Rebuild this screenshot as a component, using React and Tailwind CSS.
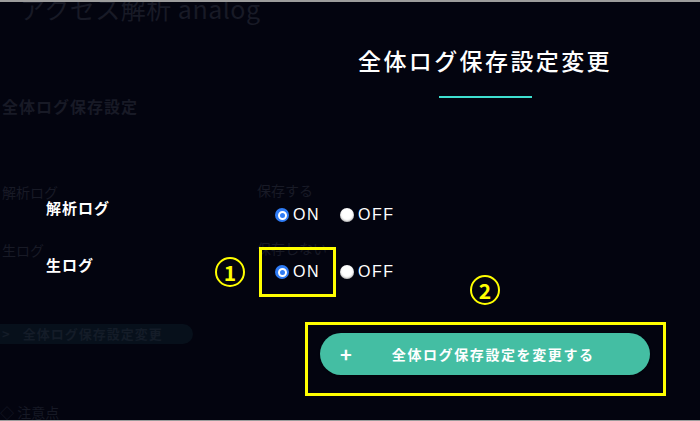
import React from 'react';

const FONT = { fontFamily: '"Noto Sans CJK JP", "Noto Sans", sans-serif' };
const LATIN = { fontFamily: '"Liberation Sans", "Noto Sans CJK JP", sans-serif' };

function Radio({ checked }) {
  if (checked) {
    return (
      <span className="flex h-[14px] w-[14px] items-center justify-center rounded-full bg-[#2f7cf6]">
        <span className="h-[9px] w-[9px] rounded-full border-[2px] border-white bg-[#2f7cf6]" />
      </span>
    );
  }
  return <span className="h-[14px] w-[14px] rounded-full bg-white shadow-[inset_0_-1px_2px_rgba(0,0,0,0.35)]" />;
}

function Choice({ checked, label }) {
  return (
    <label style={LATIN} className="flex items-center gap-[4px] text-[16px] leading-none tracking-[1.5px] text-white">
      <Radio checked={checked} />
      <span>{label}</span>
    </label>
  );
}

function CircledNumber({ n }) {
  return (
    <span className="flex h-[30px] w-[30px] items-center justify-center rounded-full border-[2px] border-[#ffff00] text-[21px] font-bold leading-none text-[#ffff00]">
      {n}
    </span>
  );
}

function BackgroundPage() {
  return (
    <div className="flex h-full flex-col text-[#181a26]">
      <div className="-mt-[10px] pl-[20px] text-[25px] leading-[32px] tracking-[0.5px]">アクセス解析 analog</div>
      <div className="mt-[72px] pl-[2px] text-[16px] font-bold leading-[20px] tracking-[1px]">全体ログ保存設定</div>
      <div className="mt-[66px] grid grid-cols-[255px_1fr] gap-y-[40px] pl-[2px] text-[14px] leading-[16px]">
        <div className="mt-[2px]">解析ログ</div>
        <div>保存する</div>
        <div className="mt-[2px]">生ログ</div>
        <div>保存しない</div>
      </div>
      <div className="mt-[66px] flex h-[37px] w-[193px] items-center gap-[12px] rounded-r-full bg-[#07101b] pl-[2px] text-[13px] font-bold tracking-[1px] text-[#141c28]">
        <span>&gt;</span>
        <span>全体ログ保存設定変更</span>
      </div>
      <div className="mt-[58px] text-[14px] text-[#161925]">◇ 注意点</div>
    </div>
  );
}

function Modal() {
  return (
    <div className="absolute inset-0 flex flex-col">
      <div className="ml-[300px] flex w-[370px] flex-col items-center pt-[41px]">
        <h1 className="text-[23px] font-medium leading-[34px] tracking-[2.4px] text-white">全体ログ保存設定変更</h1>
        <div className="mt-[19px] h-[2px] w-[93px] bg-[#3ee0d0]" />
      </div>

      <div className="mt-[99px] grid grid-cols-[229px_1fr] gap-y-[31px] pl-[46px]">
        <div className="text-[15px] font-bold leading-[22px] tracking-[1px] text-white">解析ログ</div>
        <div className="mt-[10px] flex items-center gap-[20px]">
          <Choice checked label="ON" />
          <Choice label="OFF" />
        </div>
        <div className="text-[15px] font-bold leading-[22px] tracking-[1px] text-white">生ログ</div>
        <div className="mt-[10px] flex items-center gap-[20px]">
          <Choice checked label="ON" />
          <Choice label="OFF" />
        </div>
      </div>

      <div className="ml-[320px] mt-[53px] flex h-[42px] w-[330px] items-center rounded-full bg-[#44bea3] pl-[20px] text-white shadow-[0_1px_2px_rgba(0,0,0,0.4)]">
        <span className="text-[20px] font-bold leading-none">+</span>
        <span className="ml-[40px] text-[14px] font-bold tracking-[1.6px]">全体ログ保存設定を変更する</span>
      </div>

      {/* annotations */}
      <div className="absolute left-[259px] top-[245px] h-[50px] w-[77px] border-[3px] border-[#ffff00]" />
      <div className="absolute left-[215px] top-[255px]">
        <CircledNumber n="1" />
      </div>
      <div className="absolute left-[470px] top-[273px]">
        <CircledNumber n="2" />
      </div>
      <div className="absolute left-[305px] top-[320px] h-[74px] w-[361px] border-[3px] border-[#ffff00]" />
    </div>
  );
}

export default function App() {
  return (
    <div style={FONT} className="relative h-[421px] w-[700px] overflow-hidden border-t-2 border-b border-[#9c9c9c] bg-[#03040f]">
      <BackgroundPage />
      <Modal />
    </div>
  );
}
